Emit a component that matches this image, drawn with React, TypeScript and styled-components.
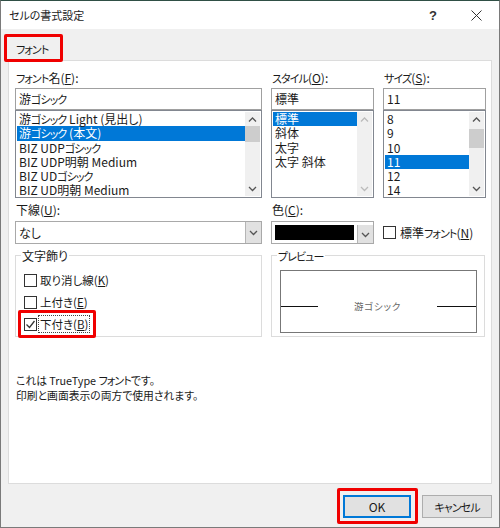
import React from 'react'
import styled, { createGlobalStyle } from 'styled-components'

const GlobalStyle = createGlobalStyle`
  html, body {
    margin: 0;
    padding: 0;
    background: #f0f0f0;
  }
  * {
    box-sizing: border-box;
  }
`
const Dialog = styled.div`
  position: relative;
  width: 500px;
  height: 528px;
  background: #f0f0f0;
  border-top: 1px solid #2f4f45;
  border-left: 1px solid #7a7a7a;
  border-right: 1px solid #7a7a7a;
  border-bottom: 1px solid #7a7a7a;
  font-family: "Noto Sans CJK JP", "Noto Sans", sans-serif;
  font-feature-settings: "palt";
  font-size: 12px;
  color: #1a1a1a;
  overflow: hidden;
  display: flex;
  flex-direction: column;
`
// the reference's katakana run much narrower than Noto's
const Kana = styled.span`
  font-size: 11px;
  letter-spacing: -0.9px;
`
const TitleBar = styled.div`
  height: 28px;
  background: #fff;
  display: flex;
  align-items: center;
  padding-left: 8px;
  font-size: 11px;
  color: #222;
`
const TitleText = styled.div`
  flex: 1;
`
const HelpIcon = styled.div`
  width: 40px;
  height: 28px;
  display: flex;
  align-items: center;
  justify-content: center;
  font-size: 13px;
  font-weight: 700;
  font-family: "Liberation Sans", sans-serif;
  color: #333;
`
const CloseIcon = styled.div`
  width: 46px;
  height: 28px;
  display: flex;
  align-items: center;
  justify-content: center;
`
const TabStrip = styled.div`
  height: 31px;
  padding: 8px 0 0 7px;
`
const Tab = styled.div`
  width: 52px;
  height: 23px;
  padding-left: 8px;
  line-height: 23px;
  white-space: nowrap;
`
const Panel = styled.div`
  width: 484px;
  height: 424px;
  margin-left: 7px;
  background: #fff;
  border: 1px solid #dcdcdc;
  padding: 10px 0 0 6px;
`
const Grid = styled.div`
  display: grid;
  grid-template-columns: 247px 103px 103px;
  column-gap: 9px;
`
const Column = styled.div`
  display: flex;
  flex-direction: column;
`
const Label = styled.div`
  height: 17px;
  line-height: 14px;
  padding-left: 1px;
  font-size: 12px;
  white-space: nowrap;
`
const LowerLabel = styled(Label)`
  height: 18px;
`
const Key = styled.span`
  text-decoration: underline;
`
const TextBox = styled.div`
  height: 22px;
  border: 1px solid #a0a0a0;
  background: #fff;
  padding-left: 3px;
  line-height: 20px;
  font-size: 12px;
`
const ListBox = styled.div`
  height: 88px;
  border: 1px solid #828790;
  background: #fff;
  padding: 1px;
  display: flex;
`
const ListItems = styled.div`
  flex: 1;
  min-width: 0;
`
const ListItem = styled.div<{ $selected?: boolean }>`
  height: 14.3px;
  line-height: 14.3px;
  padding-left: 2px;
  font-size: 12px;
  white-space: nowrap;
  background: ${p => (p.$selected ? '#0078d7' : 'transparent')};
  color: ${p => (p.$selected ? '#fff' : '#1a1a1a')};
`
const ScrollTrack = styled.div`
  width: 15px;
  flex: none;
  background: #f0f0f0;
  display: flex;
  flex-direction: column;
  align-items: center;
  justify-content: space-between;
  padding: 4px 0;
`
const Thumb = styled.div<{ $height: number; $gap: number }>`
  width: 100%;
  height: ${p => p.$height}px;
  margin-top: ${p => p.$gap}px;
  margin-bottom: auto;
  background: #cdcdcd;
`
const LowerGrid = styled(Grid)`
  margin-top: 5px;
`
const Combo = styled.div`
  height: 23px;
  border: 1px solid #a9a9a9;
  background: #fff;
  display: flex;
  line-height: 21px;
  padding-left: 3px;
`
const ComboValue = styled.div`
  flex: 1;
`
const ComboButton = styled.div`
  width: 16px;
  background: #e1e1e1;
  border-left: 1px solid #b5b5b5;
  display: flex;
  align-items: center;
  justify-content: center;
`
const ColorCombo = styled(Combo)`
  padding: 3px 0 0 3px;
`
const Swatch = styled.div`
  width: 79px;
  height: 15px;
  background: #000;
  margin-right: 3px;
`
const StandardFont = styled.div`
  display: flex;
  align-items: center;
  height: 23px;
  margin-top: 18px;
  gap: 4px;
  white-space: nowrap;
  font-size: 12px;
`
const Box = styled.div`
  width: 13px;
  height: 13px;
  flex: none;
  border: 1px solid #333;
  background: #fff;
  display: flex;
  align-items: center;
  justify-content: center;
`
const GroupsGrid = styled.div`
  display: grid;
  grid-template-columns: 247px 214px;
  column-gap: 9px;
  margin-top: 11px;
`
const Group = styled.div`
  position: relative;
  height: 82px;
  border: 1px solid #dcdcdc;
`
const Legend = styled.div`
  position: absolute;
  top: -8px;
  left: 5px;
  padding: 0 1px;
  background: #fff;
  line-height: 15px;
  font-size: 12px;
`
const CheckList = styled.div`
  display: flex;
  flex-direction: column;
  gap: 6px;
  padding: 16px 0 0 8px;
`
const CheckRow = styled.div`
  display: flex;
  align-items: center;
  height: 16px;
  gap: 2px;
`
const CheckText = styled.span<{ $focus?: boolean }>`
  padding: 0 1px;
  line-height: 16px;
  font-size: 11.5px;
  white-space: nowrap;
  outline: ${p => (p.$focus ? '1px dotted #444' : 'none')};
`
const PreviewBox = styled.div`
  margin: 14px 7px 0 8px;
  height: 63px;
  border: 1px solid #777;
  display: flex;
  align-items: center;
  padding-top: 9px;
`
const PreviewLine = styled.div<{ $width: number }>`
  height: 1px;
  background: #111;
  width: ${p => p.$width}px;
`
const PreviewText = styled.div`
  flex: 1;
  text-align: center;
  font-size: 9.5px;
  letter-spacing: 0.8px;
  color: #666;
`
const Description = styled.div`
  margin-top: 36px;
  padding-left: 1px;
  font-size: 10.8px;
  line-height: 14.5px;
`
const Footer = styled.div`
  display: flex;
  justify-content: flex-end;
  gap: 11px;
  padding: 11px 7px 0 0;
`
const DialogButton = styled.div<{ $primary?: boolean }>`
  height: 23px;
  width: ${p => (p.$primary ? 68 : 70)}px;
  background: #e1e1e1;
  border: ${p => (p.$primary ? '2px solid #0078d7' : '1px solid #adadad')};
  display: flex;
  align-items: center;
  justify-content: center;
  font-size: 12px;
`
const Highlight = styled.div`
  position: absolute;
  border: 3px solid #f00000;
  border-radius: 2px;
  pointer-events: none;
`
const TabHighlight = styled(Highlight)`
  left: 3px;
  top: 33px;
  width: 59px;
  height: 28px;
`
const CheckHighlight = styled(Highlight)`
  left: 17px;
  top: 309px;
  width: 78px;
  height: 28px;
`
const OkHighlight = styled(Highlight)`
  left: 336px;
  top: 487px;
  width: 81px;
  height: 36px;
`

function Chevron ({ dir = 'down', color = '#555' }: { dir?: 'up' | 'down'; color?: string }): React.ReactElement {
  const d = dir === 'up' ? 'M1 5.5 L4.5 2 L8 5.5' : 'M1 2 L4.5 5.5 L8 2'
  return (
    <svg width="9" height="7" viewBox="0 0 9 7" fill="none">
      <path d={d} stroke={color} strokeWidth="1.3" />
    </svg>
  )
}

function Scroll ({ thumb, gap, color }: { thumb?: number; gap?: number; color?: string }): React.ReactElement {
  return (
    <ScrollTrack>
      <Chevron dir="up" color={color} />
      {thumb ? <Thumb $height={thumb} $gap={gap ?? 0} /> : null}
      <Chevron color={color} />
    </ScrollTrack>
  )
}

const fontNames = [
  <>游<Kana>ゴシック</Kana> Light (見出し)</>,
  <>游<Kana>ゴシック</Kana> (本文)</>,
  <>BIZ UDP<Kana>ゴシック</Kana></>,
  <>BIZ UDP明朝 Medium</>,
  <>BIZ UD<Kana>ゴシック</Kana></>,
  <>BIZ UD明朝 Medium</>,
]
const styleNames = ['標準', '斜体', '太字', '太字 斜体']
const sizes = ['8', '9', '10', '11', '12', '14']

export default function App (): React.ReactElement {
  return (
    <Dialog>
      <GlobalStyle />
      <TitleBar>
        <TitleText>セルの書式設定</TitleText>
        <HelpIcon>?</HelpIcon>
        <CloseIcon>
          <svg width="11" height="11" viewBox="0 0 11 11" fill="none">
            <path d="M0.5 0.5 L10.5 10.5 M10.5 0.5 L0.5 10.5" stroke="#333" strokeWidth="1" />
          </svg>
        </CloseIcon>
      </TitleBar>
      <TabStrip>
        <Tab><Kana>フォント</Kana></Tab>
      </TabStrip>
      <Panel>
        <Grid>
          <Column>
            <Label><Kana>フォント</Kana>名(<Key>F</Key>):</Label>
            <TextBox>游<Kana>ゴシック</Kana></TextBox>
            <ListBox>
              <ListItems>
                {fontNames.map((n, i) => (
                  <ListItem key={i} $selected={i === 1}>{n}</ListItem>
                ))}
              </ListItems>
              <Scroll thumb={16} gap={3} />
            </ListBox>
          </Column>
          <Column>
            <Label><Kana>スタイル</Kana>(<Key>O</Key>):</Label>
            <TextBox>標準</TextBox>
            <ListBox>
              <ListItems>
                {styleNames.map((n, i) => (
                  <ListItem key={n} $selected={i === 0}>{n}</ListItem>
                ))}
              </ListItems>
              <Scroll color="#bbb" />
            </ListBox>
          </Column>
          <Column>
            <Label><Kana>サイズ</Kana>(<Key>S</Key>):</Label>
            <TextBox>11</TextBox>
            <ListBox>
              <ListItems>
                {sizes.map((n, i) => (
                  <ListItem key={n} $selected={i === 3}>{n}</ListItem>
                ))}
              </ListItems>
              <Scroll thumb={19} gap={6} />
            </ListBox>
          </Column>
        </Grid>
        <LowerGrid>
          <Column>
            <LowerLabel>下線(<Key>U</Key>):</LowerLabel>
            <Combo>
              <ComboValue>なし</ComboValue>
              <ComboButton><Chevron /></ComboButton>
            </Combo>
          </Column>
          <Column>
            <LowerLabel>色(<Key>C</Key>):</LowerLabel>
            <ColorCombo>
              <Swatch />
              <ComboButton><Chevron /></ComboButton>
            </ColorCombo>
          </Column>
          <StandardFont>
            <Box />
            <span>標準<Kana>フォント</Kana>(<Key>N</Key>)</span>
          </StandardFont>
        </LowerGrid>
        <GroupsGrid>
          <Group>
            <Legend>文字飾り</Legend>
            <CheckList>
              <CheckRow>
                <Box />
                <CheckText>取り消し線(<Key>K</Key>)</CheckText>
              </CheckRow>
              <CheckRow>
                <Box />
                <CheckText>上付き(<Key>E</Key>)</CheckText>
              </CheckRow>
              <CheckRow>
                <Box>
                  <svg width="11" height="11" viewBox="0 0 11 11" fill="none">
                    <path d="M1.5 5.5 L4.5 8.5 L9.5 2" stroke="#333" strokeWidth="1.3" />
                  </svg>
                </Box>
                <CheckText $focus>下付き(<Key>B</Key>)</CheckText>
              </CheckRow>
            </CheckList>
          </Group>
          <Group>
            <Legend><Kana>プレビュー</Kana></Legend>
            <PreviewBox>
              <PreviewLine $width={37} />
              <PreviewText>游ゴシック</PreviewText>
              <PreviewLine $width={39} />
            </PreviewBox>
          </Group>
        </GroupsGrid>
        <Description>
          これは TrueType <Kana>フォント</Kana>です。<br />
          印刷と画面表示の両方で使用されます。
        </Description>
      </Panel>
      <Footer>
        <DialogButton $primary>OK</DialogButton>
        <DialogButton><Kana>キャンセル</Kana></DialogButton>
      </Footer>
      <TabHighlight />
      <CheckHighlight />
      <OkHighlight />
    </Dialog>
  )
}
